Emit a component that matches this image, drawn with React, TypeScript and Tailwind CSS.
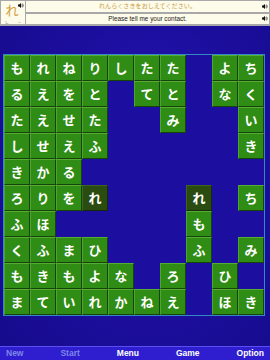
import React from "react";

const rows = [
  "もれねりしたた_よち",
  "るえをと_てと_なく",
  "たえせた__み__い",
  "しせえふ_____き",
  "きかる_______",
  "ろりをR___R_ち",
  "ふほ_____も__",
  "くふまひ___ふ_み",
  "もきもよな_ろ_ひ_",
  "まていれかねえ_ほき",
];

function Speaker() {
  return (
    <svg width="6" height="5" viewBox="0 0 6 5" className="shrink-0">
      <path d="M0 1.5h1.2L3 0v5L1.2 3.5H0z" fill="#111" />
      <path d="M3.8 1.3q.7 1.2 0 2.4M4.6 0.6q1.3 1.9 0 3.8" stroke="#111" strokeWidth="0.6" fill="none" />
    </svg>
  );
}

function Tile({ ch }: { ch: string }) {
  if (ch === "_") return <div className="w-[26px] h-[26px]" />;
  const dark = ch === "R";
  const label = dark ? "れ" : ch;
  return (
    <div
      className={
        "w-[26px] h-[26px] flex items-center justify-center text-white text-[13px] font-bold border-t border-l border-b border-r " +
        (dark
          ? "bg-[#2b4c10] border-t-[#3d6420] border-l-[#3d6420] border-b-[#17290a] border-r-[#17290a]"
          : "bg-[#2f8c14] border-t-[#55ad35] border-l-[#4ea530] border-b-[#17430a] border-r-[#17430a]")
      }
      style={{ fontFamily: '"Noto Sans CJK JP", sans-serif' }}
    >
      {label}
    </div>
  );
}

export default function App() {
  return (
    <div
      className="w-[270px] h-[360px] flex flex-col overflow-hidden bg-[radial-gradient(ellipse_at_55%_45%,#2a1bb8_0%,#1d0fa0_45%,#150a8a_100%)]"
      style={{ fontFamily: '"Liberation Sans", Arial, sans-serif' }}
    >
      {/* header */}
      <div className="h-[26px] bg-[#a8a8a8] flex p-[1px] gap-[1px]">
        <div className="w-[24px] h-[23px] bg-[#fdfbe9] relative flex flex-col items-center justify-between pt-[2px]">
          <span
            className="text-[13px] leading-[13px] text-[#d49a3a] -ml-[2px]"
            style={{ fontFamily: '"Noto Sans CJK JP", sans-serif' }}
          >
            れ
          </span>
          <div className="absolute right-[1px] top-[2px]">
            <Speaker />
          </div>
          <div className="w-full flex justify-between px-[4px] h-[4px] items-end overflow-hidden">
            <span className="text-[3.5px] leading-[3.5px] text-[#555]" style={{ fontFamily: '"Noto Sans CJK JP", sans-serif' }}>
              し
            </span>
            <span className="text-[3.5px] leading-[3.5px] text-[#555]">⇔</span>
          </div>
        </div>
        <div className="flex-1 flex flex-col gap-[2px]">
          <div className="h-[11px] bg-[#fdfbe9] flex items-center justify-center relative">
            <span
              className="text-[6.1px] leading-none text-[#c99a45]"
              style={{ fontFamily: '"Noto Sans CJK JP", sans-serif' }}
            >
              れんらくさきをおしえてください。
            </span>
            <div className="absolute right-[1px] top-[3px]">
              <Speaker />
            </div>
          </div>
          <div className="h-[10px] bg-[#fdfbe9] flex items-center justify-center relative">
            <span className="text-[6.4px] leading-none text-[#222]">Please tell me your contact.</span>
            <div className="absolute right-[1px] top-[2px]">
              <Speaker />
            </div>
          </div>
        </div>
      </div>

      {/* board */}
      <div className="mt-[28px] ml-[3px] w-[262px] border border-[#3488c4] bg-[#1c0e9e]">
        {rows.map((r, i) => (
          <div key={i} className="flex">
            {Array.from(r).map((ch, j) => (
              <Tile key={j} ch={ch} />
            ))}
          </div>
        ))}
      </div>

      <div className="flex-1" />

      {/* bottom bar */}
      <div className="h-[14px] bg-[#2e1ed0] border-t border-[#5a4ff0] flex items-center justify-between px-[6px] text-[8.5px] font-bold">
        <span className="text-[#7f86e6]">New</span>
        <span className="text-[#7f86e6]">Start</span>
        <span className="text-white">Menu</span>
        <span className="text-white">Game</span>
        <span className="text-white">Option</span>
      </div>
    </div>
  );
}
